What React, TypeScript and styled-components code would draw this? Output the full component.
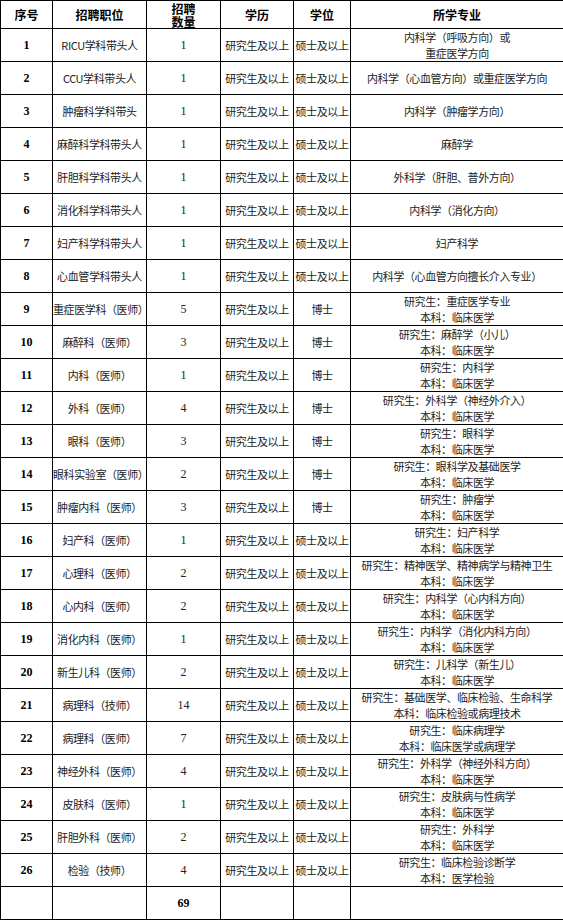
import styled, { createGlobalStyle } from "styled-components";

const GlobalStyle = createGlobalStyle`
  html, body {
    margin: 0;
    padding: 0;
    background: #ffffff;
  }
`;

type Row = {
  no: number;
  post: string;
  count: number;
  edu: string;
  degree: string;
  major: string[];
};

const EDU = "研究生及以上";
const MASTER = "硕士及以上";
const DOCTOR = "博士";
const CLINIC = "本科：临床医学";

const rows: Row[] = [
  { no: 1, post: "RICU学科带头人", count: 1, edu: EDU, degree: MASTER, major: ["内科学（呼吸方向）或", "重症医学方向"] },
  { no: 2, post: "CCU学科带头人", count: 1, edu: EDU, degree: MASTER, major: ["内科学（心血管方向）或重症医学方向"] },
  { no: 3, post: "肿瘤科学科带头", count: 1, edu: EDU, degree: MASTER, major: ["内科学（肿瘤学方向）"] },
  { no: 4, post: "麻醉科学科带头人", count: 1, edu: EDU, degree: MASTER, major: ["麻醉学"] },
  { no: 5, post: "肝胆科学科带头人", count: 1, edu: EDU, degree: MASTER, major: ["外科学（肝胆、普外方向）"] },
  { no: 6, post: "消化科学科带头人", count: 1, edu: EDU, degree: MASTER, major: ["内科学（消化方向）"] },
  { no: 7, post: "妇产科学科带头人", count: 1, edu: EDU, degree: MASTER, major: ["妇产科学"] },
  { no: 8, post: "心血管学科带头人", count: 1, edu: EDU, degree: MASTER, major: ["内科学（心血管方向擅长介入专业）"] },
  { no: 9, post: "重症医学科（医师）", count: 5, edu: EDU, degree: DOCTOR, major: ["研究生：重症医学专业", CLINIC] },
  { no: 10, post: "麻醉科（医师）", count: 3, edu: EDU, degree: DOCTOR, major: ["研究生：麻醉学（小儿）", CLINIC] },
  { no: 11, post: "内科（医师）", count: 1, edu: EDU, degree: DOCTOR, major: ["研究生：内科学", CLINIC] },
  { no: 12, post: "外科（医师）", count: 4, edu: EDU, degree: DOCTOR, major: ["研究生：外科学（神经外介入）", CLINIC] },
  { no: 13, post: "眼科（医师）", count: 3, edu: EDU, degree: DOCTOR, major: ["研究生：眼科学", CLINIC] },
  { no: 14, post: "眼科实验室（医师）", count: 2, edu: EDU, degree: DOCTOR, major: ["研究生：眼科学及基础医学", CLINIC] },
  { no: 15, post: "肿瘤内科（医师）", count: 3, edu: EDU, degree: DOCTOR, major: ["研究生：肿瘤学", CLINIC] },
  { no: 16, post: "妇产科（医师）", count: 1, edu: EDU, degree: MASTER, major: ["研究生：妇产科学", CLINIC] },
  { no: 17, post: "心理科（医师）", count: 2, edu: EDU, degree: MASTER, major: ["研究生：精神医学、精神病学与精神卫生", CLINIC] },
  { no: 18, post: "心内科（医师）", count: 2, edu: EDU, degree: MASTER, major: ["研究生：内科学（心内科方向）", CLINIC] },
  { no: 19, post: "消化内科（医师）", count: 1, edu: EDU, degree: MASTER, major: ["研究生：内科学（消化内科方向）", CLINIC] },
  { no: 20, post: "新生儿科（医师）", count: 2, edu: EDU, degree: MASTER, major: ["研究生：儿科学（新生儿）", CLINIC] },
  { no: 21, post: "病理科（技师）", count: 14, edu: EDU, degree: MASTER, major: ["研究生：基础医学、临床检验、生命科学", "本科：临床检验或病理技术"] },
  { no: 22, post: "病理科（医师）", count: 7, edu: EDU, degree: MASTER, major: ["研究生：临床病理学", "本科：临床医学或病理学"] },
  { no: 23, post: "神经外科（医师）", count: 4, edu: EDU, degree: MASTER, major: ["研究生：外科学（神经外科方向）", CLINIC] },
  { no: 24, post: "皮肤科（医师）", count: 1, edu: EDU, degree: MASTER, major: ["研究生：皮肤病与性病学", CLINIC] },
  { no: 25, post: "肝胆外科（医师）", count: 2, edu: EDU, degree: MASTER, major: ["研究生：外科学", CLINIC] },
  { no: 26, post: "检验（技师）", count: 4, edu: EDU, degree: MASTER, major: ["研究生：临床检验诊断学", "本科：医学检验"] },
];

const widths = [52, 94, 74, 73, 57, 213];

const Table = styled.table`
  width: 563px;
  border-collapse: collapse;
  table-layout: fixed;
  font-family: "Noto Sans CJK SC", sans-serif;
  font-size: 11px;
  color: #222;
`;

const HeadRow = styled.tr`
  height: 28px;
`;

const BodyRow = styled.tr`
  height: 33px;
`;

const HeadCell = styled.th`
  border: 1px solid #000;
  padding: 0;
  font-family: "Noto Sans CJK SC", sans-serif;
  font-size: 12px;
  font-weight: 700;
  line-height: 13px;
  color: #000;
  text-align: center;
  vertical-align: middle;
`;

const Cell = styled.td<{ $num?: boolean; $bold?: boolean }>`
  border: 1px solid #000;
  padding: 0;
  text-align: center;
  vertical-align: middle;
  white-space: nowrap;
  line-height: 16px;
  letter-spacing: ${(p) => (p.$num ? "0" : "-0.4px")};
  font-family: ${(p) =>
    p.$num ? `"Liberation Serif", serif` : `"Noto Sans CJK SC", sans-serif`};
  font-size: ${(p) => (p.$num ? "12px" : "11px")};
  font-weight: ${(p) => (p.$bold ? 700 : 400)};
  color: ${(p) => (p.$bold ? "#000" : "#222")};
`;

const Line = styled.div<{ $h?: number }>`
  white-space: nowrap;
  height: ${(p) => p.$h ?? 16}px;
  line-height: ${(p) => p.$h ?? 16}px;
`;

export default function App() {
  const total = rows.reduce((sum, r) => sum + r.count, 0);
  return (
    <>
      <GlobalStyle />
      <Table>
        <colgroup>
          {widths.map((w, i) => (
            <col key={i} style={{ width: w }} />
          ))}
        </colgroup>
        <thead>
          <HeadRow>
            <HeadCell>序号</HeadCell>
            <HeadCell>招聘职位</HeadCell>
            <HeadCell>
              <Line $h={13}>招聘</Line>
              <Line $h={13}>数量</Line>
            </HeadCell>
            <HeadCell>学历</HeadCell>
            <HeadCell>学位</HeadCell>
            <HeadCell>所学专业</HeadCell>
          </HeadRow>
        </thead>
        <tbody>
          {rows.map((r) => (
            <BodyRow key={r.no}>
              <Cell $num $bold>
                {r.no}
              </Cell>
              <Cell>{r.post}</Cell>
              <Cell $num>{r.count}</Cell>
              <Cell>{r.edu}</Cell>
              <Cell>{r.degree}</Cell>
              <Cell>
                {r.major.map((m, i) => (
                  <Line key={i}>{m}</Line>
                ))}
              </Cell>
            </BodyRow>
          ))}
          <BodyRow>
            <Cell />
            <Cell />
            <Cell $num $bold>
              {total}
            </Cell>
            <Cell />
            <Cell />
            <Cell />
          </BodyRow>
        </tbody>
      </Table>
    </>
  );
}
